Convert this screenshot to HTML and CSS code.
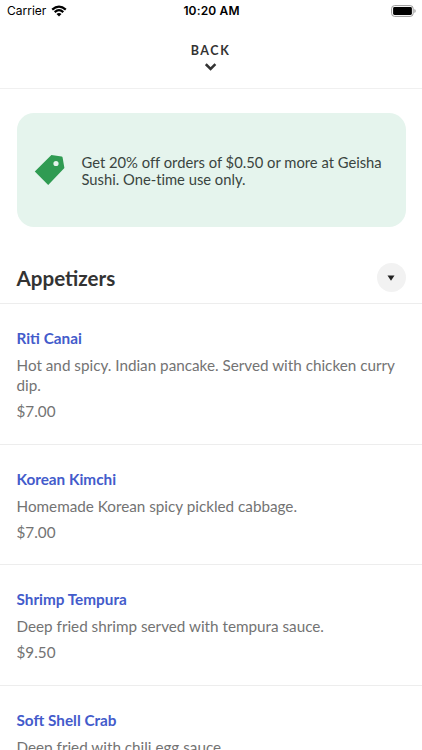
FILE: index.html
```html
<!DOCTYPE html>
<html lang="en">
<head>
<meta charset="utf-8">
<title>Menu</title>
<link rel="stylesheet" href="styles.css">
</head>
<body>
<div class="screen">
  <div class="status">
    <div class="carrier"><span>Carrier</span>
      <svg class="wifi" viewBox="0 0 16 12" width="16" height="12"><path d="M1.2 4.6Q8-1.5 14.8 4.6M3.7 7.1Q8 3.2 12.3 7.1" fill="none" stroke="#000" stroke-width="2.2"/><path d="M5.5 8.9Q8 7 10.5 8.9L8 11.4Z"/></svg>
    </div>
    <div class="clock">10:20 AM</div>
    <svg class="battery" viewBox="0 0 25 12" width="25" height="12"><rect x=".6" y=".6" width="21.6" height="10.8" rx="3" fill="#fff" stroke="#999"/><rect x="2.1" y="2" width="18.8" height="8" rx="1.4"/><path d="M23.4 4v4q1.3-.7 1.3-2T23.4 4" fill="#999"/></svg>
  </div>
  <header class="back">
    <span class="back-label">BACK</span>
    <svg class="chevron" viewBox="0 0 12 8" width="12" height="8"><path d="M.8 1.2 5.6 6l4.8-4.8" fill="none" stroke="#333" stroke-width="2.5"/></svg>
  </header>
  <section class="promo">
    <svg class="tag" viewBox="0 0 32 32" width="32" height="32"><path fill="#2f9b52" fill-rule="evenodd" d="M17.4 1 27.6 2.6Q28.4 2.8 28.6 3.5L30.4 14 14.2 31 .8 17.6ZM22 6.9a2.6 2.6 0 1 0 0 5.2 2.6 2.6 0 0 0 0-5.2Z"/></svg>
    <p class="promo-text">Get 20% off orders of $0.50 or more at Geisha Sushi. One-time use only.</p>
  </section>
  <div class="section-head">
    <h1>Appetizers</h1>
    <span class="toggle"><svg viewBox="0 0 8 6" width="8" height="6"><path d="M.5.4h7L4 5.7Z" fill="#222"/></svg></span>
  </div>
  <ul class="menu">
    <li class="item"><h2>Riti Canai</h2><p class="desc">Hot and spicy. Indian pancake. Served with chicken curry dip.</p><p class="price">$7.00</p></li>
    <li class="item"><h2>Korean Kimchi</h2><p class="desc">Homemade Korean spicy pickled cabbage.</p><p class="price">$7.00</p></li>
    <li class="item"><h2>Shrimp Tempura</h2><p class="desc">Deep fried shrimp served with tempura sauce.</p><p class="price">$9.50</p></li>
    <li class="item"><h2>Soft Shell Crab</h2><p class="desc">Deep fried with chili egg sauce.</p><p class="price">$9.50</p></li>
  </ul>
</div>
</body>
</html>
```
FILE: styles.css
```css
* { box-sizing: border-box; margin: 0; padding: 0; }
body { background: #fff; font-family: Lato, "Liberation Sans", sans-serif; }
svg { display: block; flex: none; }
.screen { width: 422px; height: 750px; overflow: hidden; }
.status {
  display: grid;
  grid-template-columns: 1fr auto 1fr;
  align-items: center;
  height: 22px;
  padding: 0 6px 0 7px;
  font: 12px/22px Inter, sans-serif;
  color: #000;
}
.carrier { display: flex; align-items: center; gap: 4.5px; }
.clock { font-weight: 600; letter-spacing: .15px; }
.battery { justify-self: end; }
.back {
  display: flex;
  flex-direction: column;
  align-items: center;
  height: 67px;
  padding: 21px 1px 0 0;
  border-bottom: 1px solid #f0f0f0;
}
.back-label { font-size: 12.5px; line-height: 16px; font-weight: 700; letter-spacing: 1.6px; color: #333; }
.chevron { margin-top: 4px; }
.promo {
  display: flex;
  align-items: center;
  gap: 16px;
  width: 389px;
  height: 114px;
  margin: 24px 0 0 16.5px;
  padding: 1px 17px 0;
  border-radius: 17px;
  background: #e5f4ed;
}
.tag { margin-top: -2px; }
.promo-text { padding-top: 1px; font-size: 14.75px; line-height: 17.5px; font-variant-ligatures: none; color: #3a4440; }
.section-head {
  display: flex;
  align-items: center;
  justify-content: space-between;
  height: 77.4px;
  padding: 25.5px 16.5px 0;
  border-bottom: 1px solid #ededed;
}
h1 { font-size: 20.6px; line-height: 26px; font-weight: 700; color: #333; }
.toggle { display: grid; place-items: center; width: 29px; height: 29px; border-radius: 50%; background: #f2f2f2; }
.menu { list-style: none; }
.item { padding: 24px 16.5px 22.4px; border-bottom: 1px solid #ededed; }
h2 { font-size: 15.3px; line-height: 20px; font-weight: 700; color: #435bcb; }
.desc, .price { font-size: 15.25px; line-height: 20px; color: #737373; }
.desc { margin-top: 7px; }
.price { margin-top: 6px; }
```
